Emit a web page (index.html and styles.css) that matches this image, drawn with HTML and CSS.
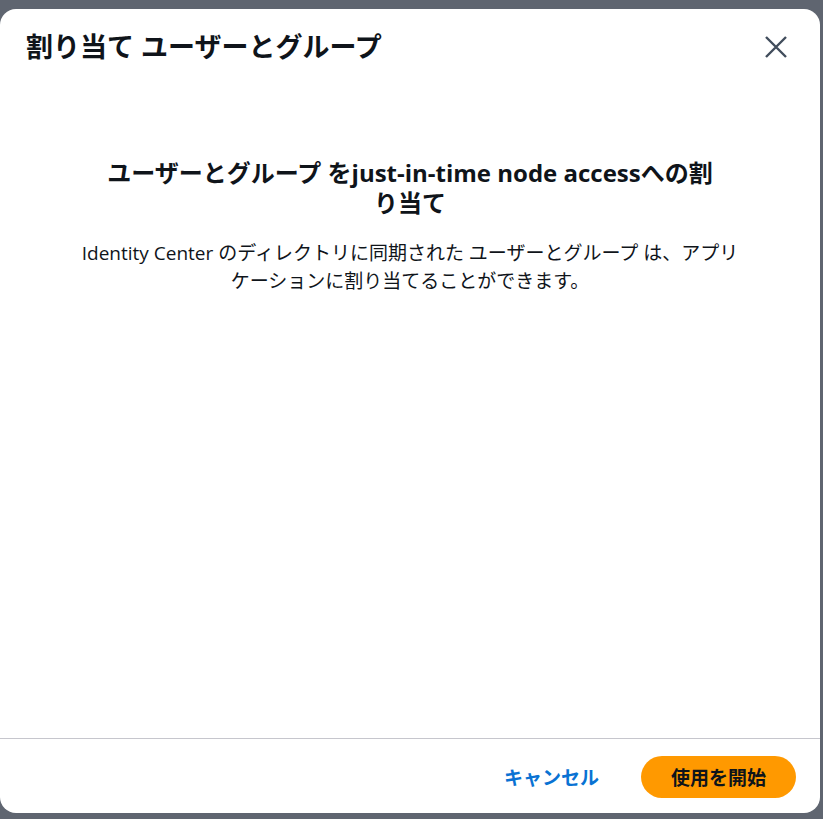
FILE: index.html
```html
<!DOCTYPE html>
<html lang="ja">
<head>
    <meta charset="utf-8">
    <title>割り当て ユーザーとグループ</title>
    <link rel="stylesheet" href="styles.css">
</head>
<body>
    <div class="modal">
        <div class="modal-header">
            <h2 class="modal-title">割り当て ユーザーとグループ</h2>
            <button class="close" aria-label="閉じる">
                <svg width="24" height="24" viewBox="0 0 24 24"><path d="M2 2 L22 22 M22 2 L2 22" stroke="#414d5c" stroke-width="2.4" fill="none"/></svg>
            </button>
        </div>
        <div class="modal-body">
            <h3 class="empty-title">ユーザーとグループ をjust-in-time node accessへの割り当て</h3>
            <p class="empty-text">Identity Center のディレクトリに同期された ユーザーとグループ は、アプリケーションに割り当てることができます。</p>
        </div>
        <div class="modal-footer">
            <button class="btn-link">キャンセル</button>
            <button class="btn-primary">使用を開始</button>
        </div>
    </div>
</body>
</html>
```

FILE: styles.css
```css
html, body { height: 100%; }
body { margin: 0; background: #5f6570; font-family: "Open Sans", "Noto Sans CJK JP", sans-serif; color: #0f141a; }
.modal { box-sizing: border-box; margin: 9px 3px 0 0; height: 804px; background: #fff; border-radius: 16px; display: flex; flex-direction: column; }
.modal-header { display: flex; justify-content: space-between; align-items: center; padding: 20px 32px 0 26px; }
.modal-title { margin: 0; font-size: 27px; font-weight: 700; line-height: 36px; }
.close { background: none; border: none; padding: 0; width: 24px; height: 24px; cursor: pointer; }
.modal-body { flex: 1; text-align: center; padding: 93px 40px 0; }
.empty-title { margin: 0 auto; max-width: 612px; font-size: 24px; font-weight: 700; line-height: 30px; }
.empty-text { margin: 21px auto 0; max-width: 672px; font-size: 19px; line-height: 28px; }
.modal-footer { border-top: 1px solid #c6c6cd; display: flex; justify-content: flex-end; align-items: center; gap: 42px; padding: 17px 24px 15px; }
.btn-link { background: none; border: none; padding: 0; color: #0972d3; font: inherit; font-size: 19px; font-weight: 700; cursor: pointer; }
.btn-primary { background: #ff9900; border: none; border-radius: 21px; height: 42px; padding: 0 30px; font: inherit; font-size: 19px; font-weight: 700; color: #0f141a; cursor: pointer; }
```
